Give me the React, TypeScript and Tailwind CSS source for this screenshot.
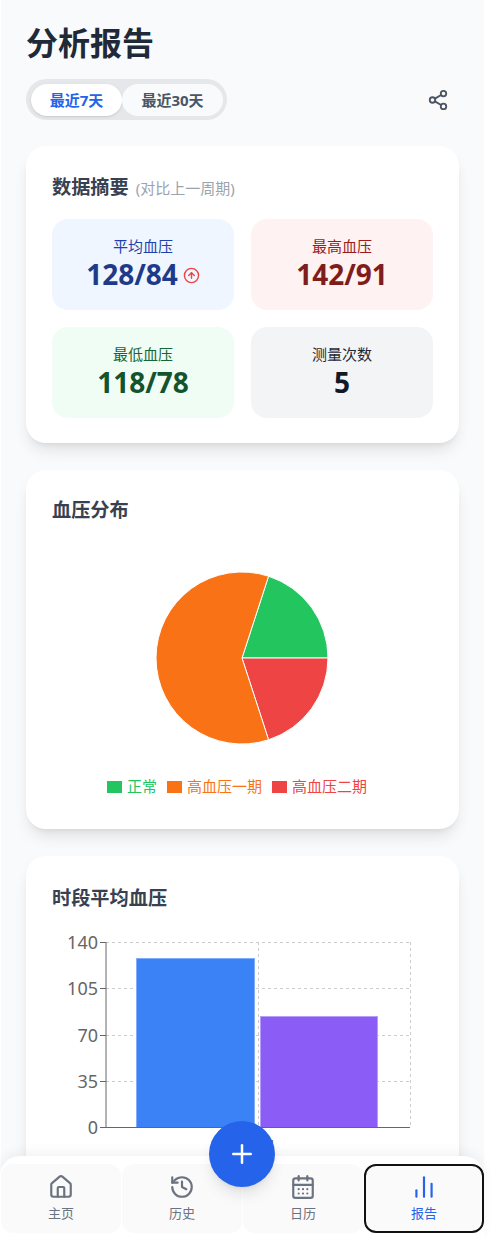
import { CalendarDays, ChartNoAxesColumn, CircleArrowUp, History, House, Plus, Share2 } from "lucide-react";

const FONT = "font-['Noto_Sans','Noto_Sans_CJK_SC',sans-serif]";

const STATS = [
  { label: "平均血压", value: "128/84", box: "bg-[#eff6ff]", labelColor: "text-[#1e40af]", valueColor: "text-[#1e3a8a]", trend: true },
  { label: "最高血压", value: "142/91", box: "bg-[#fef2f2]", labelColor: "text-[#991b1b]", valueColor: "text-[#7f1d1d]", trend: false },
  { label: "最低血压", value: "118/78", box: "bg-[#f0fdf4]", labelColor: "text-[#166534]", valueColor: "text-[#14532d]", trend: false },
  { label: "测量次数", value: "5", box: "bg-[#f3f4f6]", labelColor: "text-[#1f2937]", valueColor: "text-[#111827]", trend: false },
];

const LEGEND = [
  { label: "正常", swatch: "bg-[#22c55e]", text: "text-[#22c55e]" },
  { label: "高血压一期", swatch: "bg-[#f97316]", text: "text-[#f97316]" },
  { label: "高血压二期", swatch: "bg-[#ef4444]", text: "text-[#ef4444]" },
];

const TABS = [
  { label: "主页", Icon: House, active: false },
  { label: "历史", Icon: History, active: false },
  { label: "日历", Icon: CalendarDays, active: false },
  { label: "报告", Icon: ChartNoAxesColumn, active: true },
];

// Slice path for the pie, angles in degrees clockwise from 3 o'clock
function slice(cx: number, cy: number, r: number, from: number, to: number) {
  const rad = (d: number) => (d * Math.PI) / 180;
  const x1 = cx + r * Math.cos(rad(from));
  const y1 = cy + r * Math.sin(rad(from));
  const x2 = cx + r * Math.cos(rad(to));
  const y2 = cy + r * Math.sin(rad(to));
  const large = to - from > 180 ? 1 : 0;
  return `M${cx} ${cy}L${x1} ${y1}A${r} ${r} 0 ${large} 1 ${x2} ${y2}Z`;
}

function PieChart() {
  return (
    <svg width="172" height="174" viewBox="0 0 172 174">
      <path d={slice(86, 87, 86, -72, 0)} fill="#22c55e" stroke="#fff" />
      <path d={slice(86, 87, 86, 0, 72)} fill="#ef4444" stroke="#fff" />
      <path d={slice(86, 87, 86, 72, 288)} fill="#f97316" stroke="#fff" />
    </svg>
  );
}

function BarChart() {
  const rows = [
    { y: 16, label: "140" },
    { y: 62, label: "105" },
    { y: 109, label: "70" },
    { y: 155, label: "35" },
    { y: 201, label: "0" },
  ];
  return (
    <svg width="381" height="234" viewBox="0 0 381 234" className="block">
      <g stroke="#ccc" strokeDasharray="3 3">
        {rows.slice(0, 4).map((r) => (
          <line key={r.y} x1="54" x2="358" y1={r.y + 0.5} y2={r.y + 0.5} />
        ))}
        <line x1="206.5" x2="206.5" y1="16" y2="201" />
        <line x1="358.5" x2="358.5" y1="16" y2="201" />
      </g>
      <rect x="84.5" y="32.5" width="118" height="169" fill="#3b82f6" stroke="#7fadf9" />
      <rect x="208.5" y="90.5" width="117" height="111" fill="#8b5cf6" stroke="#b79cf9" />
      <line x1="54" x2="54" y1="16" y2="201" stroke="#666" />
      <line x1="54" x2="358" y1="201.5" y2="201.5" stroke="#666" />
      {rows.map((r) => (
        <g key={r.label}>
          <line x1="48" x2="54" y1={r.y + 0.5} y2={r.y + 0.5} stroke="#666" />
          <text x="46" y={r.y + 7} textAnchor="end" fontSize="18" fill="#666">
            {r.label}
          </text>
        </g>
      ))}
      <text x="206" y="225" textAnchor="middle" fontSize="16" fill="#666">
        平均
      </text>
    </svg>
  );
}

export default function App() {
  return (
    <div className={`relative h-[1238px] w-[498px] overflow-hidden bg-white ${FONT}`}>
      <div className="h-full w-[483px] ml-px bg-[#f9fafb] pl-[25px] pr-[25px] pt-[19px]">
        <h1 className="text-[32px] leading-[48px] font-bold text-[#1f2937]">分析报告</h1>

        <div className="mt-[12px] flex items-center justify-between">
          <div className="flex h-[41px] rounded-full bg-[#e5e7eb] p-[4px] pl-[5px]">
            <button className="h-[32px] mt-px w-[91px] rounded-full bg-white text-[15px] font-bold text-[#2563eb] shadow-sm">最近7天</button>
            <button className="h-[32px] mt-px w-[101px] rounded-full bg-[#f9fafb] text-[15px] font-bold text-[#4b5563]">最近30天</button>
          </div>
          <button className="mr-px flex h-[40px] w-[40px] items-center justify-center rounded-full bg-[#fafafa]">
            <Share2 size={22} color="#4b5563" />
          </button>
        </div>

        <section className="mt-[26px] h-[297px] rounded-[20px] bg-white p-[26px] shadow-lg">
          <div className="flex items-baseline">
            <h2 className="text-[19.2px] leading-[30px] font-bold text-[#374151]">数据摘要</h2>
            <span className="ml-[7px] text-[15px] text-[#9ca3af]">(对比上一周期)</span>
          </div>
          <div className="mt-[17px] grid grid-cols-2 gap-[17px]">
            {STATS.map((s) => (
              <div key={s.label} className={`flex h-[91px] flex-col items-center justify-center rounded-2xl pb-px ${s.box}`}>
                <span className={`text-[15px] leading-[20px] ${s.labelColor}`}>{s.label}</span>
                <span className={`flex items-center text-[28px] leading-[36px] font-bold ${s.valueColor}`}>
                  {s.value}
                  {s.trend && <CircleArrowUp size={17} color="#ef4444" className="ml-[5px] mt-[3px]" />}
                </span>
              </div>
            ))}
          </div>
        </section>

        <section className="mt-[27px] h-[359px] rounded-[20px] bg-white p-[26px] shadow-lg">
          <h2 className="text-[19.2px] leading-[27px] font-bold text-[#374151]">血压分布</h2>
          <div className="mt-[48px] flex justify-center pr-px">
            <PieChart />
          </div>
          <div className="mt-[31px] flex items-center justify-center gap-[10px] pr-[11px]">
            {LEGEND.map((l) => (
              <span key={l.label} className="flex items-center gap-[5px]">
                <span className={`h-[12px] w-[15px] mt-px ${l.swatch}`} />
                <span className={`text-[15px] leading-[20px] ${l.text}`}>{l.label}</span>
              </span>
            ))}
          </div>
        </section>

        <section className="mt-[27px] h-[400px] rounded-[20px] bg-white px-[26px] pt-[27px] shadow-lg">
          <h2 className="text-[19.2px] leading-[30px] font-bold text-[#374151]">时段平均血压</h2>
          <div className="mt-[13px]">
            <BarChart />
          </div>
        </section>
      </div>

      <nav className="absolute bottom-0 left-0 grid h-[82px] w-[484px] grid-cols-4 gap-px rounded-t-[20px] bg-white pl-[1px] pt-[8px] pb-[5px] shadow-[0_-4px_12px_rgba(0,0,0,0.05)]">
        {TABS.map(({ label, Icon, active }) => (
          <div
            key={label}
            className={`flex flex-col items-center rounded-xl bg-[#fafafa] ${
              active ? "border-2 border-[#111] pt-[8px] text-[#2563eb]" : "pt-[10px] text-[#6b7280]"
            }`}
          >
            <Icon size={26} strokeWidth={2} />
            <span className="mt-[4px] text-[13px] leading-[18px]">{label}</span>
          </div>
        ))}
      </nav>

      <button className="absolute left-[209px] top-[1121px] flex h-[66px] w-[66px] items-center justify-center rounded-full bg-[#2563eb] text-white shadow-lg">
        <Plus size={30} />
      </button>
    </div>
  );
}
